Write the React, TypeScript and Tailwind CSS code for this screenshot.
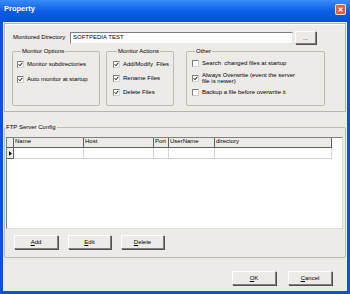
import React from 'react';

const Check = ({ on }: { on?: boolean }) => (
  <span className="w-[7px] h-[7px] shrink-0 border border-t-[#808080] border-l-[#808080] border-r-[#d4d0c8] border-b-[#d4d0c8] bg-white flex items-center justify-center">
    {on && (
      <svg viewBox="0 0 7 7" className="w-[5px] h-[5px]">
        <path d="M1 3.2 L2.8 5.2 L6 1.2" stroke="#000" strokeWidth="1.4" fill="none" />
      </svg>
    )}
  </span>
);

const Row = ({ on, children }: { on?: boolean; children: React.ReactNode }) => (
  <div className="flex items-center gap-[3px]">
    <Check on={on} />
    <span className="whitespace-nowrap">{children}</span>
  </div>
);

const Btn = ({ k, rest, w }: { k: string; rest: string; w: string }) => (
  <button
    className={`${w} h-[14px] bg-[#ecebe8] border border-t-white border-l-white border-r-[#808080] border-b-[#808080] shadow-[1px_1px_0_#505050] text-[6px] leading-[7px] flex items-center justify-center`}
  >
    <span className="underline">{k}</span>
    {rest}
  </button>
);

export default function App() {
  return (
    <div className="w-[350px] h-[294px] bg-[#0b52dc] flex flex-col font-['Liberation_Sans',Arial,sans-serif] text-[6px] leading-[7px] text-black overflow-hidden">
      {/* Title bar */}
      <div className="h-[22px] shrink-0 bg-linear-to-b from-[#3a8cf8] via-[#0a5de6] to-[#0650d6] flex items-start pt-[4px] pl-[4px] pr-[4px]">
        <span className="text-white font-bold text-[7.5px] leading-[10px]">Property</span>
        <div className="ml-auto w-[11px] h-[11px] rounded-[2px] border border-white/80 bg-[#e0603c] flex items-center justify-center">
          <svg viewBox="0 0 9 9" className="w-[7px] h-[7px]">
            <path d="M2 2 L7 7 M7 2 L2 7" stroke="#fff" strokeWidth="1.5" />
          </svg>
        </div>
      </div>

      {/* Body */}
      <div className="flex-1 mx-[3px] mb-[3px] bg-[#edebe8] flex flex-col">
        {/* Upper panel */}
        <div className="mt-[1px] ml-[1px] w-[342px] h-[89px] border border-[#b8b5ad] shadow-[inset_1px_1px_0_#fff] flex flex-col">
          <div className="mt-[7px] h-[13px] flex items-center">
            <span className="pl-[8px] w-[65px] whitespace-nowrap">Monitored Directory</span>
            <div className="w-[223px] h-[12px] bg-white border border-t-[#808080] border-l-[#808080] border-r-[#e8e8e8] border-b-[#e8e8e8] pl-[2px] flex items-center">
              SOFTPEDIA TEST
            </div>
            <button className="ml-[2px] w-[21px] h-[13px] bg-[#ecebe8] border border-t-white border-l-white border-r-[#808080] border-b-[#808080] shadow-[1px_1px_0_#505050] leading-[6px]">
              ...
            </button>
          </div>

          <div className="mt-[4px] flex pl-[7px]">
            <fieldset className="w-[88px] h-[58px] border border-[#bcbab4] rounded-[2px] pl-[4px]">
              <legend className="ml-[4px] px-[1px]">Monitor Options</legend>
              <div className="pt-[6px] flex flex-col gap-[8px]">
                <Row on>Monitor subdirectories</Row>
                <Row on>Auto monitor at startup</Row>
              </div>
            </fieldset>
            <fieldset className="ml-[6px] w-[68px] h-[58px] border border-[#bcbab4] rounded-[2px] pl-[6px]">
              <legend className="ml-[4px] px-[1px]">Monitor Actions</legend>
              <div className="pt-[6px] flex flex-col gap-[7px]">
                <Row on>Add/Modify&nbsp; Files</Row>
                <Row on>Rename Files</Row>
                <Row on>Delete Files</Row>
              </div>
            </fieldset>
            <fieldset className="ml-[12px] w-[139px] h-[58px] border border-[#bcbab4] rounded-[2px] pl-[5px]">
              <legend className="ml-[3px] px-[1px]">Other</legend>
              <div className="pt-[5px] flex flex-col gap-[5px]">
                <Row>Search&nbsp; changed files at startup</Row>
                <div className="flex items-center gap-[3px]">
                  <Check on />
                  <span className="leading-[6px]">
                    Always Overwrite (event the server
                    <br />
                    file is newer)
                  </span>
                </div>
                <Row>Backup a file before overwrite it</Row>
              </div>
            </fieldset>
          </div>
        </div>

        {/* FTP Server Config */}
        <fieldset className="mt-[12px] ml-[1px] w-[342px] h-[134px] border border-[#bcbab4] rounded-[2px]">
          <legend className="px-[1px]">FTP Server Config</legend>
          <div className="mt-[6px] ml-[1px] w-[337px] h-[92px] bg-white border border-t-[#808080] border-l-[#808080] border-r-[#dcdcdc] border-b-[#dcdcdc]">
            <div className="flex h-[10px] w-[325px]">
              <div className="w-[7px] bg-[#ecebe8] border-r border-b border-[#606060]" />
              <div className="w-[70px] bg-[#ecebe8] border-r border-b border-[#606060] pl-[1px]">Name</div>
              <div className="w-[70px] bg-[#ecebe8] border-r border-b border-[#606060] pl-[1px]">Host</div>
              <div className="w-[15px] bg-[#ecebe8] border-r border-b border-[#606060] pl-[1px]">Port</div>
              <div className="w-[46px] bg-[#ecebe8] border-r border-b border-[#606060] pl-[1px]">UserName</div>
              <div className="w-[117px] bg-[#ecebe8] border-r border-b border-[#606060] pl-[1px]">directory</div>
            </div>
            <div className="flex h-[11px] w-[325px]">
              <div className="w-[7px] bg-[#ecebe8] border-r border-b border-[#606060] flex items-center justify-center">
                <svg viewBox="0 0 4 6" className="w-[3px] h-[5px]">
                  <path d="M0 0 L4 3 L0 6 Z" fill="#000" />
                </svg>
              </div>
              <div className="w-[70px] border-r border-b border-[#d4d4d4]" />
              <div className="w-[70px] border-r border-b border-[#d4d4d4]" />
              <div className="w-[15px] border-r border-b border-[#d4d4d4]" />
              <div className="w-[46px] border-r border-b border-[#d4d4d4]" />
              <div className="w-[117px] border-r border-b border-[#d4d4d4]" />
            </div>
          </div>
          <div className="mt-[6px] ml-[9px] flex gap-[10px]">
            <Btn k="A" rest="dd" w="w-[44px]" />
            <Btn k="E" rest="dit" w="w-[43px]" />
            <Btn k="D" rest="elete" w="w-[43px]" />
          </div>
        </fieldset>

        {/* OK / Cancel */}
        <div className="mt-[13px] flex justify-end gap-[12px] pr-[15px]">
          <Btn k="O" rest="K" w="w-[44px]" />
          <Btn k="C" rest="ancel" w="w-[44px]" />
        </div>
      </div>
    </div>
  );
}
